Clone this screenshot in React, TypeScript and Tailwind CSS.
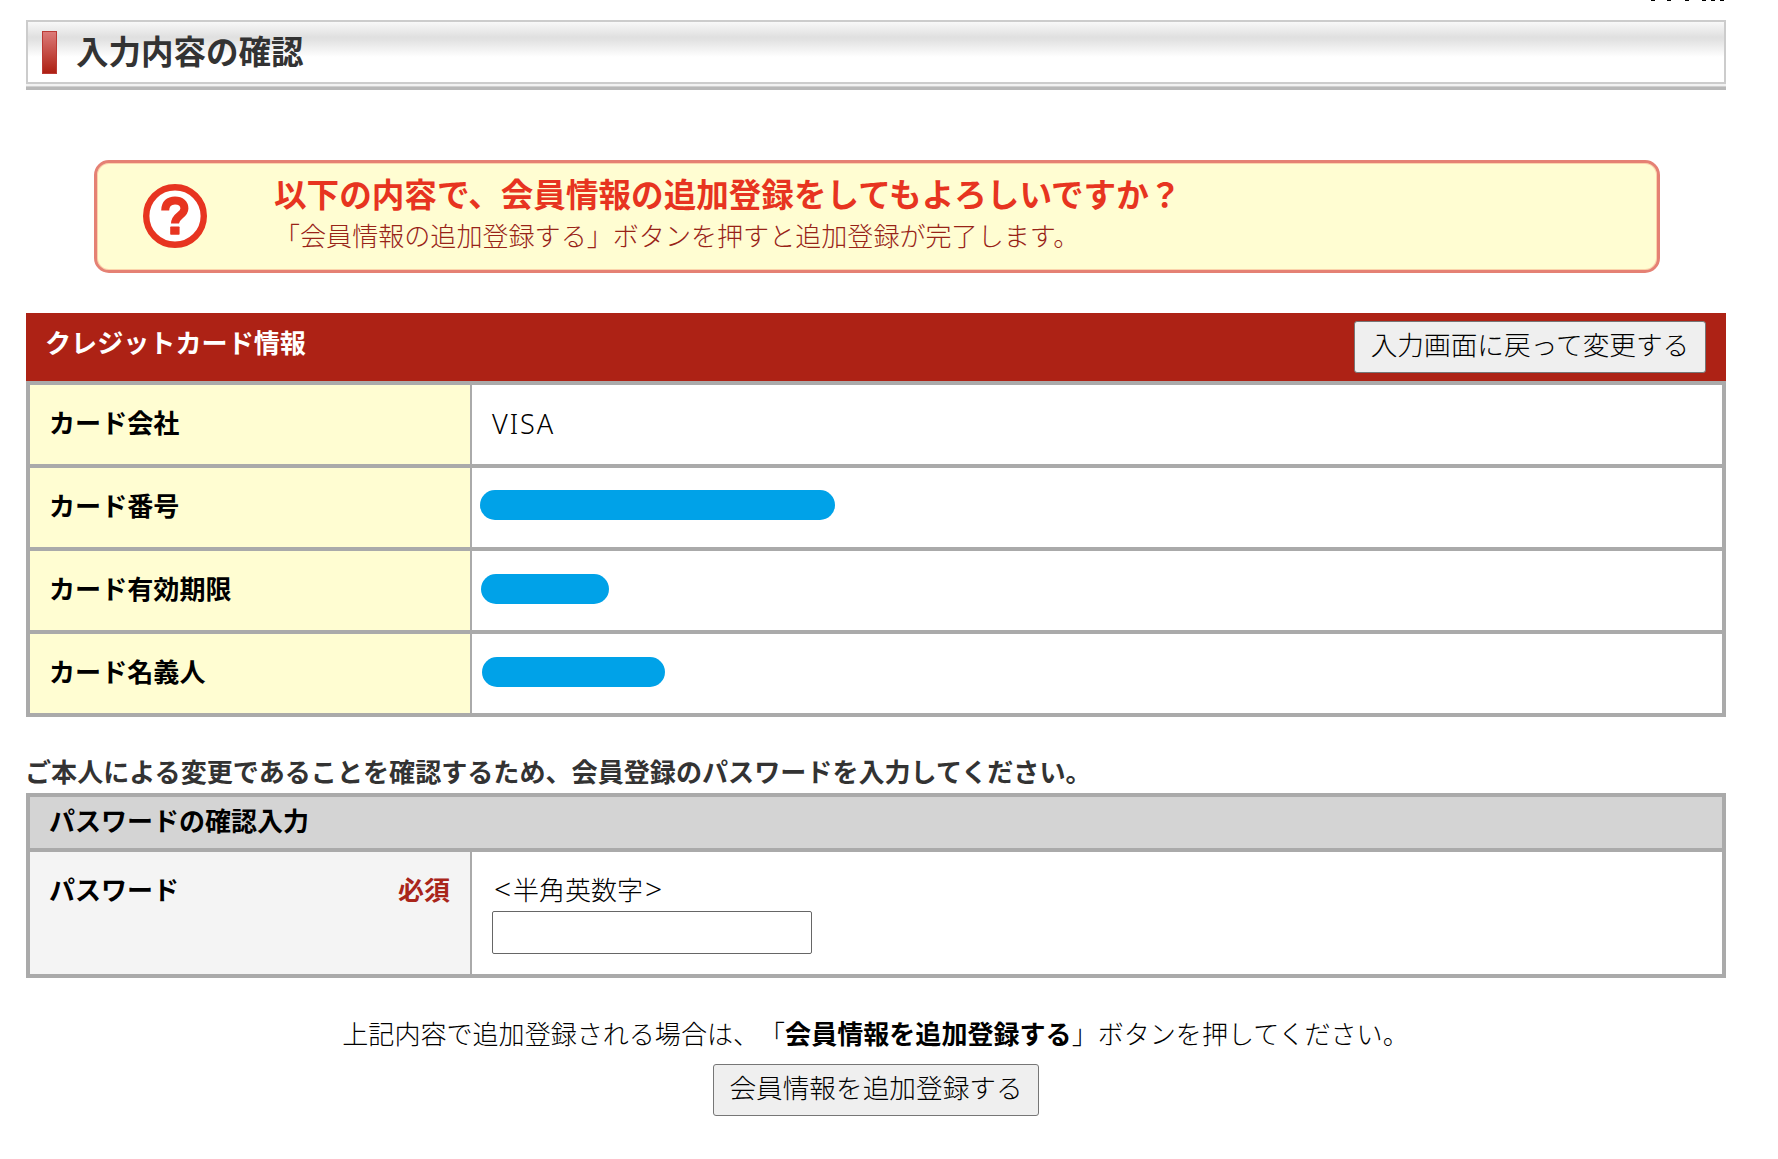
import React from 'react';

const cardRows = [
  { label: 'カード会社', value: 'VISA' },
  { label: 'カード番号', pill: 'ml-2 mb-[5px] w-[355px]' },
  { label: 'カード有効期限', pill: 'ml-[9px] mb-[3px] w-[128px]' },
  { label: 'カード名義人', pill: 'ml-[10px] mb-[3px] w-[183px]' },
];

function QuestionIcon() {
  return (
    <svg className="h-16 w-16" viewBox="0 0 64 64" fill="none">
      <circle cx="32" cy="32" r="28.8" fill="#fff" stroke="#e73420" strokeWidth="6.4" />
      <path
        d="M22.2 26.4C22.2 19.6 26 16.4 32 16.4S41.4 19.8 41.4 24.4C41.4 31.5 32 31.2 32 39.6"
        stroke="#e73420"
        strokeWidth="8"
      />
      <rect x="27.2" y="42.4" width="9.4" height="8.4" rx="0.8" fill="#e73420" />
    </svg>
  );
}

function PageTitle() {
  return (
    <header className="h-[70px] border-b-[3px] border-[#b8b8b8]">
      <div className="h-[67px] border-b border-[#d0d0d0] bg-[#f2f2f2] pb-[2px]">
        <div className="flex h-16 items-center border-2 border-[#cccccc] bg-[linear-gradient(to_bottom,#f8f8f8_0px,#e0e0e0_15px,#e2e2e2_18px,#ffffff_35px)] pl-[14px]">
          <span className="mt-px h-[43px] w-[15px] shrink-0 border border-[#bb3a35] bg-[linear-gradient(to_bottom,#dc7a78,#ad2013)]" />
          <h1 className="mb-1 ml-[19px] text-[32.5px] leading-none font-bold text-[#333333]">入力内容の確認</h1>
        </div>
      </div>
    </header>
  );
}

function FormButton({ children, className }: { children: React.ReactNode; className: string }) {
  return (
    <button
      type="button"
      className={`h-[52px] rounded-[3px] border border-[#767676] bg-[#efefef] pb-[6px] text-[26.67px] leading-none font-light whitespace-nowrap text-black ${className}`}
    >
      {children}
    </button>
  );
}

export default function App() {
  return (
    <main className="h-[1159px] w-[1778px] overflow-hidden bg-white pr-[52px] pl-[26px] font-['Noto_Sans_CJK_JP',sans-serif] text-[26px] leading-none text-black [text-spacing-trim:space-all]">
      <div className="flex h-5 items-start justify-end pr-[2px]">
        <i className="mr-3 h-px w-1 bg-black" />
        <i className="mr-[14px] h-px w-1 bg-black" />
        <i className="mr-[13px] h-px w-1 bg-black" />
        <i className="mr-[5px] h-px w-1 bg-black" />
        <i className="mr-[5px] h-px w-1 bg-black" />
        <i className="h-px w-1 bg-black" />
      </div>

      <PageTitle />

      <section className="mt-[70px] mr-[66px] ml-[68px] flex h-[113px] rounded-[15px] border-[3px] border-[#e58174] bg-[#fffdd2] shadow-[inset_0_0_0_1px_#fbd3ab]">
        <div className="mt-[21px] ml-[46px]">
          <QuestionIcon />
        </div>
        <div className="ml-[67px] pt-[13px]">
          <h2 className="text-[32.6px] leading-[34px] font-bold text-[#e73420]">
            以下の内容で、会員情報の追加登録をしてもよろしいですか？
          </h2>
          <p className="mt-2 text-[26.07px] leading-[34px] font-light text-[#982317]">
            「会員情報の追加登録する」ボタンを押すと追加登録が完了します。
          </p>
        </div>
      </section>

      <section className="mt-10">
        <div className="flex h-[68px] items-start justify-between bg-[#ad2215] pt-2 pr-5 pl-[19px]">
          <h2 className="pt-[8px] text-[26.1px] font-bold text-white">クレジットカード情報</h2>
          <FormButton className="w-[352px]">入力画面に戻って変更する</FormButton>
        </div>
        <div className="border-4 border-b-0 border-[#aaaaaa]">
          {cardRows.map((row) => (
            <div key={row.label} className="flex h-[83px] items-stretch border-b-4 border-[#aaaaaa]">
              <div className="flex w-[442px] items-center border-r-2 border-[#aaaaaa] bg-[#fffdd2] pb-[5px] pl-[19px] text-[26.1px] font-bold">
                {row.label}
              </div>
              <div className="flex items-center">
                {row.value && (
                  <span className="ml-5 pb-[3px] font-['Noto_Sans',sans-serif] text-[27px] font-[350] tracking-[2px]">
                    {row.value}
                  </span>
                )}
                {row.pill && <span className={`block h-[30px] rounded-full bg-[#00a2e8] ${row.pill}`} />}
              </div>
            </div>
          ))}
        </div>
      </section>

      <p className="-ml-px mt-10 h-9 text-[26.08px] leading-[29px] font-bold text-[#333333]">
        ご本人による変更であることを確認するため、会員登録のパスワードを入力してください。
      </p>

      <section className="border-4 border-[#aaaaaa]">
        <h2 className="h-[55px] border-b-4 border-[#aaaaaa] bg-[#d4d4d4] pt-[10px] pl-[19px] font-bold">
          パスワードの確認入力
        </h2>
        <div className="flex h-[122px]">
          <div className="flex w-[442px] justify-between border-r-2 border-[#aaaaaa] bg-[#f4f4f4] pt-6 pr-5 pl-[19px] font-bold">
            <span>パスワード</span>
            <span className="text-[#a9251a]">必須</span>
          </div>
          <div className="pt-6 pl-5 font-light">
            <label htmlFor="password" className="block h-[35px]">
              <span className="inline-block w-[21px] text-center font-['Noto_Sans',sans-serif] text-[30px] leading-[20px] font-light">
                &lt;
              </span>
              半角英数字
              <span className="inline-block w-[21px] text-center font-['Noto_Sans',sans-serif] text-[30px] leading-[20px] font-light">
                &gt;
              </span>
            </label>
            <input
              id="password"
              type="password"
              className="block h-[43px] w-[320px] rounded-[2px] border border-[#666666] bg-white"
            />
          </div>
        </div>
      </section>

      <div className="flex flex-col items-center pt-[42px]">
        <p className="-ml-px text-[26.05px] leading-[26px] font-light">
          上記内容で追加登録される場合は、「<b className="font-bold">会員情報を追加登録する</b>」ボタンを押してください。
        </p>
        <FormButton className="mt-[18px] w-[326px]">会員情報を追加登録する</FormButton>
      </div>
    </main>
  );
}
